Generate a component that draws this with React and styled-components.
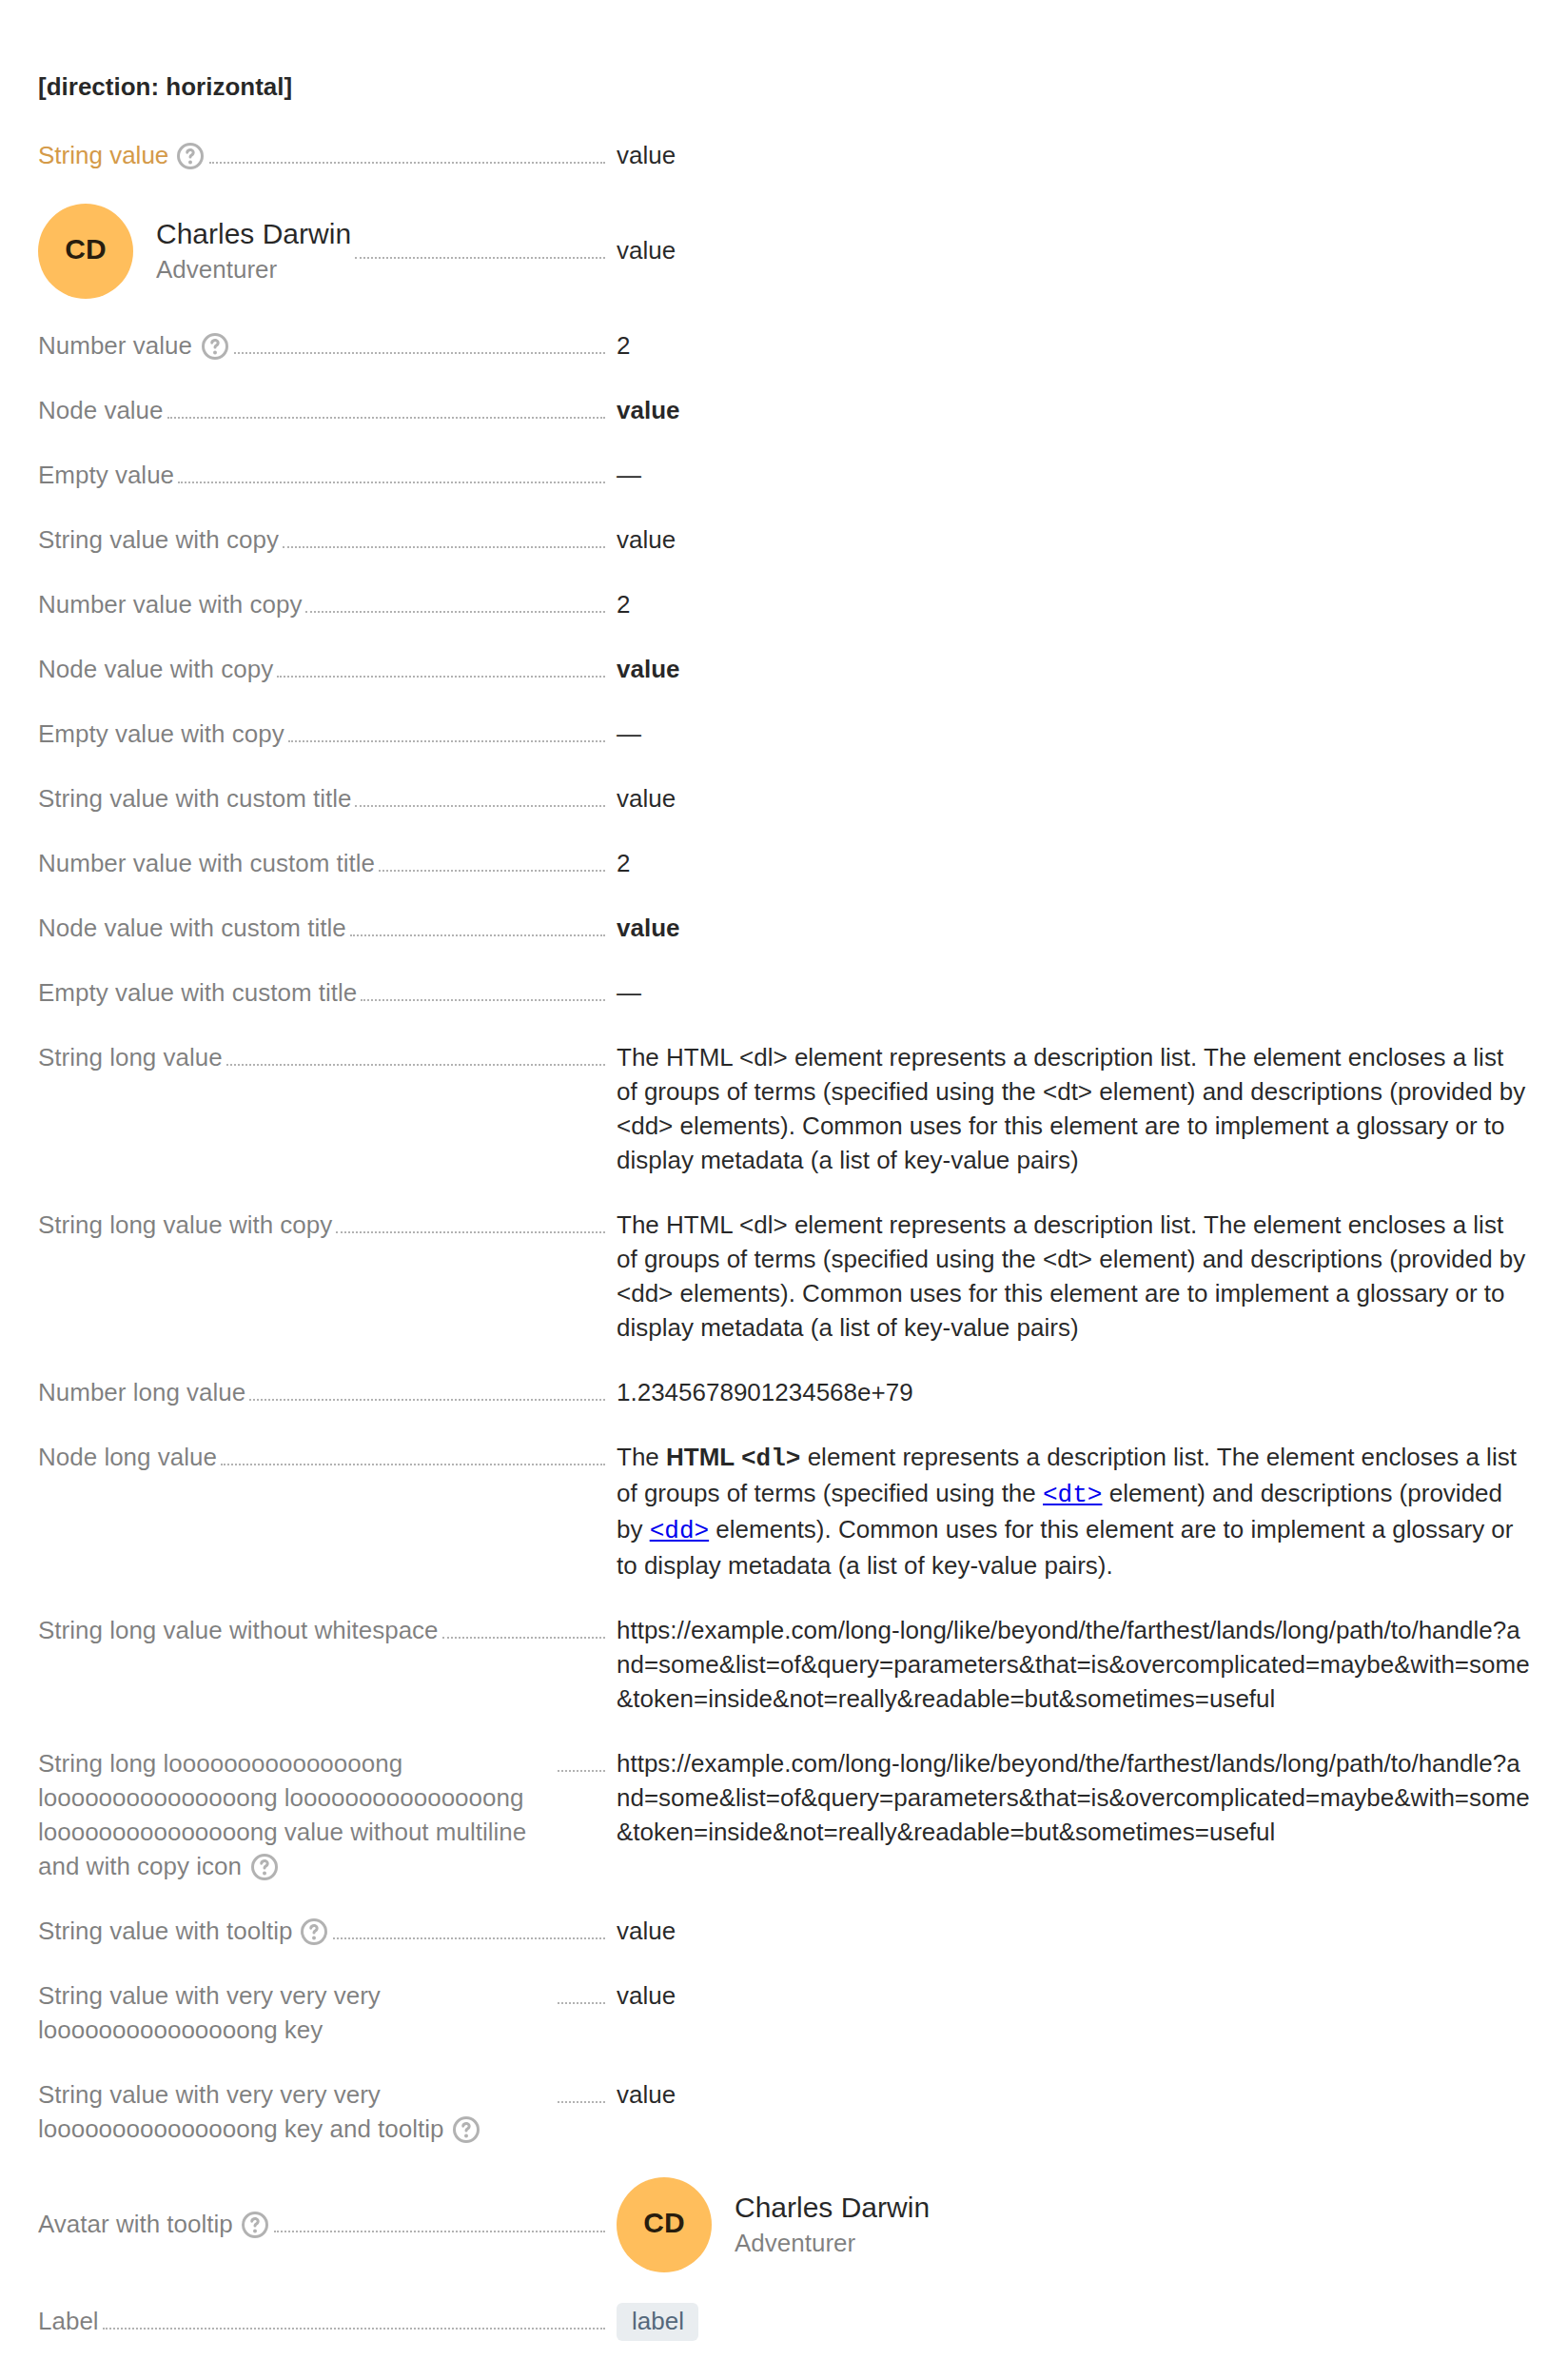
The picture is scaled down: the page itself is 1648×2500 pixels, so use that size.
import React from "react";
import styled, { createGlobalStyle } from "styled-components";

const GlobalStyle = createGlobalStyle`
  body {
    margin: 0;
    background: #ffffff;
    color: rgba(0, 0, 0, 0.85);
    font-family: "Liberation Sans", Arial, sans-serif;
    font-size: 26px;
    line-height: 36px;
  }
`;

const Page = styled.main`
  padding: 73px 40px 39px;
`;

const Title = styled.h4`
  margin: 0 0 37px;
  font-size: 26px;
  line-height: 36px;
  font-weight: 700;
`;

const List = styled.dl`
  display: flex;
  flex-direction: column;
  gap: 32px;
  margin: 0;
`;

const Item = styled.div`
  display: flex;
  align-items: ${(p) => (p.$centered ? "center" : "flex-start")};
  gap: 8px;
`;

const Term = styled.dt`
  display: flex;
  align-items: ${(p) => (p.$centered ? "center" : "flex-start")};
  flex: 0 0 600px;
`;

const TermText = styled.div`
  margin: ${(p) => (p.$block ? "0" : "-1px 0 1px")};
  color: ${(p) => (p.$warning ? "#d49a48" : "rgba(0, 0, 0, 0.5)")};
  overflow-wrap: anywhere;
`;

const Dots = styled.div`
  flex: 1 0 50px;
  box-sizing: border-box;
  margin: ${(p) => (p.$centered ? "14px 4px 0" : "24px 4px 0")};
  border-bottom: 2px dotted rgba(0, 0, 0, 0.3);
`;

const Definition = styled.dd`
  flex: 1 1 0;
  min-width: 0;
  margin: ${(p) => (p.$block ? "0" : "-1px 0 1px")};
  overflow-wrap: anywhere;
  word-break: ${(p) => (p.$breakAll ? "break-all" : "normal")};
`;

const NoBreak = styled.span`
  white-space: nowrap;
`;

const HelpMark = styled.svg`
  width: 32px;
  height: 32px;
  margin: 3px 0 1px ${(p) => p.$gap}px;
  vertical-align: top;
  color: rgba(0, 0, 0, 0.3);
`;

const Code = styled.code`
  font-family: "Liberation Mono", "Courier New", monospace;
  font-size: 26px;
`;

const Link = styled.a`
  color: #0000ee;
  text-decoration: underline;
`;

const User = styled.div`
  display: flex;
  align-items: center;
  gap: 24px;
`;

const Avatar = styled.div`
  display: flex;
  align-items: center;
  justify-content: center;
  box-sizing: border-box;
  width: 100px;
  height: 100px;
  padding-bottom: 4px;
  border-radius: 50%;
  background: #ffbe5c;
  color: rgba(0, 0, 0, 0.85);
  font-size: 30px;
  line-height: 40px;
  font-weight: 700;
`;

const UserInfo = styled.div`
  display: flex;
  flex-direction: column;
`;

const UserName = styled.span`
  color: rgba(0, 0, 0, 0.85);
  font-size: 30px;
  line-height: 40px;
  white-space: nowrap;
`;

const UserRole = styled.span`
  margin: -1px 0 1px;
  color: rgba(0, 0, 0, 0.5);
`;

const Label = styled.div`
  box-sizing: border-box;
  width: 86px;
  height: 40px;
  padding: 0 0 0 16px;
  border-radius: 6px;
  background: #e9edf0;
  color: #54687b;
  line-height: 38px;
`;

function HelpIcon({ gap }) {
  return (
    <HelpMark
      $gap={gap}
      viewBox="0 0 16 16"
      fill="currentColor"
      aria-hidden="true"
    >
      <path
        fillRule="evenodd"
        clipRule="evenodd"
        d="M8 13.5a5.5 5.5 0 1 0 0-11 5.5 5.5 0 0 0 0 11M8 15A7 7 0 1 0 8 1a7 7 0 0 0 0 14"
      />
      <path d="M6.44 4.54c.43-.354.994-.565 1.56-.565 1.217 0 2.34.82 2.34 2.14 0 .377-.079.745-.298 1.1-.208.339-.513.614-.875.867-.217.153-.326.257-.379.328-.038.052-.038.07-.038.089a.75.75 0 0 1-1.5 0c0-.794.544-1.286 1.057-1.645.28-.196.4-.332.458-.426a.54.54 0 0 0 .074-.313c0-.3-.243-.641-.839-.641a1 1 0 0 0-.608.223.765.765 0 0 0-.276.48.75.75 0 0 1-1.491-.16c.07-.66.354-1.125.815-1.477" />
      <circle cx="8" cy="11.25" r="1" />
    </HelpMark>
  );
}

function Person() {
  return (
    <User>
      <Avatar>CD</Avatar>
      <UserInfo>
        <UserName>Charles Darwin</UserName>
        <UserRole>Adventurer</UserRole>
      </UserInfo>
    </User>
  );
}

function TermName({ text, help, gap = 6.7 }) {
  if (!help) return text;
  const cut = text.lastIndexOf(" ") + 1;
  return (
    <>
      {text.slice(0, cut)}
      <NoBreak>
        {text.slice(cut)}
        <HelpIcon gap={gap} />
      </NoBreak>
    </>
  );
}

const LONG_TEXT =
  "The HTML <dl> element represents a description list. The element encloses a list of groups of terms (specified using the <dt> element) and descriptions (provided by <dd> elements). Common uses for this element are to implement a glossary or to display metadata (a list of key-value pairs)";
const LONG_URL =
  "https://example.com/long-long/like/beyond/the/farthest/lands/long/path/to/handle?and=some&list=of&query=parameters&that=is&overcomplicated=maybe&with=some&token=inside&not=really&readable=but&sometimes=useful";
const LONG_WORD = "looooooooooooooong";

const bold = <strong>value</strong>;

const richText = (
  <>
    The{" "}
    <strong>
      HTML <Code>{"<dl>"}</Code>
    </strong>{" "}
    element represents a description list. The element encloses a list of groups
    of terms (specified using the{" "}
    <Link href="#dt">
      <Code>{"<dt>"}</Code>
    </Link>{" "}
    element) and descriptions (provided by{" "}
    <Link href="#dd">
      <Code>{"<dd>"}</Code>
    </Link>{" "}
    elements). Common uses for this element are to implement a glossary or to
    display metadata (a list of key-value pairs).
  </>
);

const items = [
  { name: "String value", help: true, warning: true, value: "value" },
  { person: true, centered: true, value: "value" },
  { name: "Number value", help: true, gap: 8, value: 2 },
  { name: "Node value", value: bold },
  { name: "Empty value" },
  { name: "String value with copy", value: "value" },
  { name: "Number value with copy", value: 2 },
  { name: "Node value with copy", value: bold },
  { name: "Empty value with copy" },
  { name: "String value with custom title", value: "value" },
  { name: "Number value with custom title", value: 2 },
  { name: "Node value with custom title", value: bold },
  { name: "Empty value with custom title" },
  { name: "String long value", value: LONG_TEXT },
  { name: "String long value with copy", value: LONG_TEXT },
  { name: "Number long value", value: "1.2345678901234568e+79" },
  { name: "Node long value", value: richText },
  {
    name: "String long value without whitespace",
    value: LONG_URL,
    breakAll: true,
  },
  {
    name: `String long ${LONG_WORD} ${LONG_WORD} ${LONG_WORD} ${LONG_WORD} value without multiline and with copy icon`,
    help: true,
    gap: 8,
    value: LONG_URL,
    breakAll: true,
  },
  { name: "String value with tooltip", help: true, value: "value" },
  { name: `String value with very very very ${LONG_WORD} key`, value: "value" },
  {
    name: `String value with very very very ${LONG_WORD} key and tooltip`,
    help: true,
    gap: 7.5,
    value: "value",
  },
  {
    name: "Avatar with tooltip",
    help: true,
    gap: 7.5,
    centered: true,
    block: true,
    value: <Person />,
  },
  { name: "Label", centered: true, block: true, value: <Label>label</Label> },
];

export default function App() {
  return (
    <>
      <GlobalStyle />
      <Page>
        <Title>[direction: horizontal]</Title>
        <List>
          {items.map((item, index) => (
            <Item key={index} $centered={item.centered}>
              <Term $centered={item.person}>
                <TermText $warning={item.warning} $block={item.person}>
                  {item.person ? (
                    <Person />
                  ) : (
                    <TermName
                      text={item.name}
                      help={item.help}
                      gap={item.gap}
                    />
                  )}
                </TermText>
                <Dots $centered={item.person} />
              </Term>
              <Definition $block={item.block} $breakAll={item.breakAll}>
                {item.value ?? "—"}
              </Definition>
            </Item>
          ))}
        </List>
      </Page>
    </>
  );
}
